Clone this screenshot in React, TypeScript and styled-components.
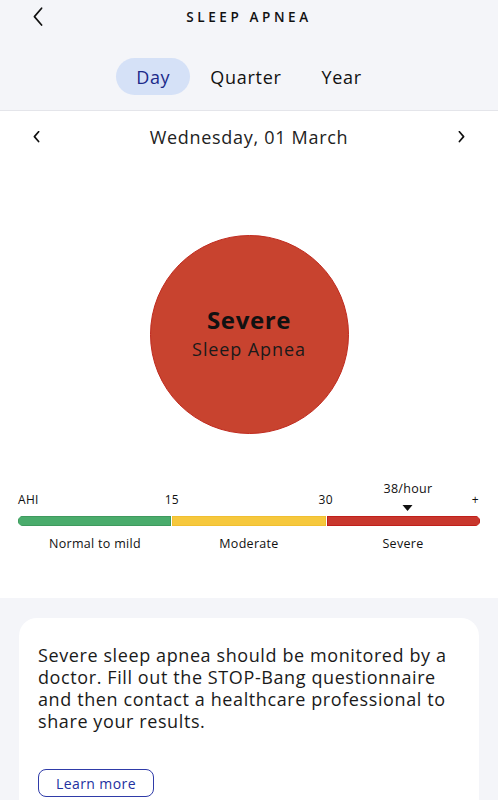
import React from "react";
import styled, { createGlobalStyle } from "styled-components";

const Global = createGlobalStyle`
  html, body { margin: 0; padding: 0; background: #f4f5f9; }
  body { font-family: "Open Sans", "Noto Sans", sans-serif; color: #111; }
  * { box-sizing: border-box; }
`;

const Page = styled.div`
  width: 498px;
  height: 800px;
  overflow: hidden;
  display: flex;
  flex-direction: column;
  background: #f4f5f9;
`;

const Header = styled.header`
  flex-shrink: 0;
  height: 111px;
  border-bottom: 1px solid #e4e5ea;
  display: flex;
  flex-direction: column;
  align-items: center;
`;

const TopBar = styled.div`
  width: 100%;
  height: 34px;
  display: flex;
  align-items: center;
  justify-content: center;
  position: relative;
`;

const BackButton = styled.button`
  position: absolute;
  left: 26px;
  top: 4px;
  width: 24px;
  height: 26px;
  border: 0;
  background: none;
  padding: 0;
  display: flex;
  align-items: center;
  justify-content: center;
`;

const Title = styled.h1`
  margin: 0;
  font-size: 13.5px;
  font-weight: 600;
  letter-spacing: 3.6px;
  color: #111;
`;

const Tabs = styled.nav`
  margin-top: 24px;
  display: flex;
  align-items: center;
`;

const Tab = styled.button<{ $active?: boolean }>`
  height: 37px;
  padding: 0 20px;
  border: 0;
  border-radius: 19px;
  background: ${(p) => (p.$active ? "#d5e1f7" : "transparent")};
  color: ${(p) => (p.$active ? "#1b2a8a" : "#111")};
  font-family: inherit;
  font-size: 18px;
  font-weight: 500;
  letter-spacing: 0.7px;
`;

const Main = styled.main`
  flex-shrink: 0;
  background: #fff;
  height: 487px;
  display: flex;
  flex-direction: column;
  align-items: center;
`;

const DateRow = styled.div`
  width: 100%;
  height: 52px;
  padding: 0 28px;
  display: flex;
  align-items: center;
  justify-content: space-between;
`;

const DateText = styled.div`
  font-size: 18px;
  color: #222;
  letter-spacing: 0.7px;
`;

const Chevron = styled.button`
  width: 16px;
  height: 16px;
  border: 0;
  background: none;
  padding: 0;
  display: flex;
  align-items: center;
  justify-content: center;
`;

const Circle = styled.div`
  margin-top: 72px;
  width: 199px;
  height: 199px;
  flex-shrink: 0;
  border-radius: 50%;
  background: #c8432f;
  border: 1px solid #c02a1e;
  display: flex;
  flex-direction: column;
  align-items: center;
  justify-content: center;
  padding-bottom: 2px;
`;

const CircleTitle = styled.div`
  font-size: 24px;
  font-weight: 700;
  color: #111;
  line-height: 30px;
  letter-spacing: 0.6px;
`;

const CircleSub = styled.div`
  font-size: 18px;
  color: #1a1a1a;
  line-height: 28px;
  letter-spacing: 0.9px;
`;

const Scale = styled.div`
  margin-top: 46px;
  width: 100%;
  padding: 0 18px;
`;

const ScaleTop = styled.div`
  height: 36px;
  position: relative;
  font-size: 12px;
  line-height: 16px;
  color: #111;
  letter-spacing: 0.3px;
`;

const TickLabel = styled.span<{ $align?: "start" | "center" }>`
  position: absolute;
  bottom: 8px;
  transform: ${(p) => (p.$align === "start" ? "none" : "translateX(-50%)")};
`;

const Marker = styled.div`
  position: absolute;
  bottom: 0;
  transform: translateX(-50%);
  display: flex;
  flex-direction: column;
  align-items: center;
  gap: 8px;
  font-size: 12.5px;
  letter-spacing: 0.3px;
`;

const Triangle = styled.div`
  width: 0;
  height: 0;
  border-left: 5.5px solid transparent;
  border-right: 5.5px solid transparent;
  border-top: 6px solid #111;
  margin-bottom: 5px;
`;

const Bar = styled.div`
  display: grid;
  grid-template-columns: 1fr 1fr 1fr;
  gap: 1px;
  height: 10px;
  border-radius: 5px;
  overflow: hidden;
`;

const Segment = styled.div<{ $color: string; $edge: string }>`
  background: ${(p) => p.$color};
  border: 1px solid ${(p) => p.$edge};
`;

const BarLabels = styled.div`
  display: grid;
  grid-template-columns: 1fr 1fr 1fr;
  margin-top: 9px;
  font-size: 12.5px;
  color: #111;
  text-align: center;
  letter-spacing: 0.3px;
`;

const InfoSection = styled.section`
  flex: 1;
  padding: 20px 19px 0;
`;

const Card = styled.div`
  background: #fff;
  border-radius: 18px;
  padding: 26px 19px 20px;
  height: 100%;
`;

const CardText = styled.p`
  margin: 0;
  font-size: 18px;
  line-height: 22px;
  color: #1a1a1a;
  letter-spacing: 0.6px;
`;

const LearnMore = styled.button`
  margin-top: 37px;
  width: 116px;
  height: 28px;
  border: 1px solid #2f3ba8;
  border-radius: 8px;
  background: #fff;
  color: #2330a0;
  font-family: inherit;
  font-size: 14px;
  font-weight: 500;
  letter-spacing: 0.4px;
`;

const ChevronIcon = ({ dir, size, w }: { dir: "left" | "right"; size: number; w: number }) => (
  <svg width={size} height={size * 1.6} viewBox="0 0 10 16" fill="none">
    <path
      d={dir === "left" ? "M8 1 L2 8 L8 15" : "M2 1 L8 8 L2 15"}
      stroke="#111"
      strokeWidth={w}
      strokeLinecap="round"
      strokeLinejoin="round"
    />
  </svg>
);

const markerPct = 84.4;

export default function App() {
  return (
    <Page>
      <Global />
      <Header>
        <TopBar>
          <BackButton aria-label="Back">
            <ChevronIcon dir="left" size={12} w={1.4} />
          </BackButton>
          <Title>SLEEP APNEA</Title>
        </TopBar>
        <Tabs>
          <Tab $active>Day</Tab>
          <Tab>Quarter</Tab>
          <Tab>Year</Tab>
        </Tabs>
      </Header>
      <Main>
        <DateRow>
          <Chevron aria-label="Previous day">
            <ChevronIcon dir="left" size={7} w={2.4} />
          </Chevron>
          <DateText>Wednesday, 01 March</DateText>
          <Chevron aria-label="Next day">
            <ChevronIcon dir="right" size={7} w={2.4} />
          </Chevron>
        </DateRow>
        <Circle>
          <CircleTitle>Severe</CircleTitle>
          <CircleSub>Sleep Apnea</CircleSub>
        </Circle>
        <Scale>
          <ScaleTop>
            <TickLabel $align="start" style={{ left: 0 }}>AHI</TickLabel>
            <TickLabel style={{ left: "33.3%" }}>15</TickLabel>
            <TickLabel style={{ left: "66.6%" }}>30</TickLabel>
            <TickLabel style={{ left: "99%" }}>+</TickLabel>
            <Marker style={{ left: `${markerPct}%` }}>
              <span>38/hour</span>
              <Triangle />
            </Marker>
          </ScaleTop>
          <Bar>
            <Segment $color="#4aac6c" $edge="#3f9a5e" />
            <Segment $color="#f6c83d" $edge="#f0bf30" />
            <Segment $color="#c8372d" $edge="#c01f1a" />
          </Bar>
          <BarLabels>
            <span>Normal to mild</span>
            <span>Moderate</span>
            <span>Severe</span>
          </BarLabels>
        </Scale>
      </Main>
      <InfoSection>
        <Card>
          <CardText>
            Severe sleep apnea should be monitored by a doctor. Fill out the STOP-Bang
            questionnaire and then contact a healthcare professional to share your results.
          </CardText>
          <LearnMore>Learn more</LearnMore>
        </Card>
      </InfoSection>
    </Page>
  );
}
